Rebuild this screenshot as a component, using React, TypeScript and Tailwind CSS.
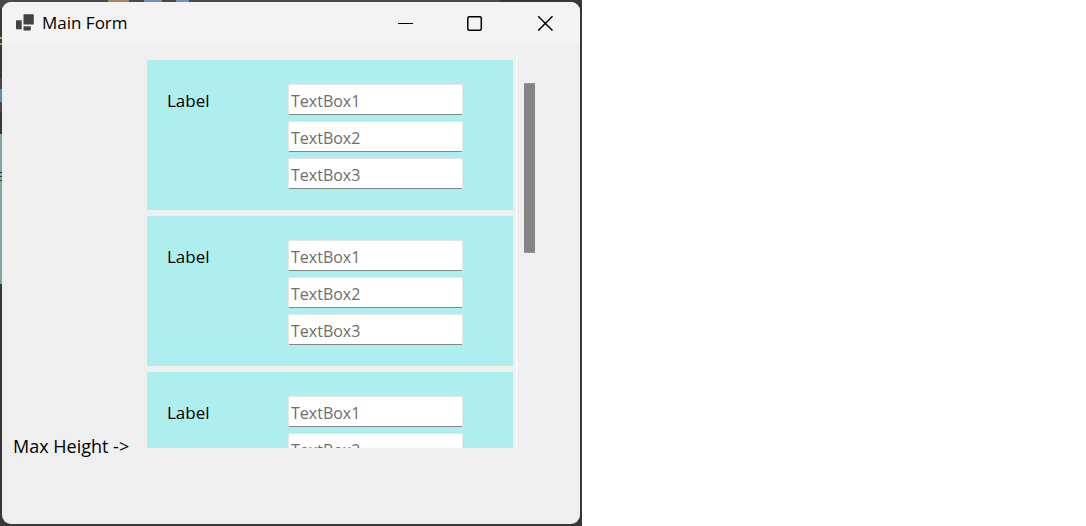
import { useId } from 'react';

const fields = ['TextBox1', 'TextBox2', 'TextBox3'];
const cards = [1, 2, 3];

function AppIcon() {
  return (
    <svg width="20" height="18" viewBox="0 0 20 18" aria-hidden="true" className="shrink-0">
      <g fill="#424242">
        <rect x="9.500" y="0.200" width="10.300" height="10.300" rx="0.5" />
        <rect x="2" y="6.200" width="5.700" height="9" rx="0.5" />
        <rect x="9.500" y="12.200" width="7.300" height="4.200" rx="0.5" />
      </g>
    </svg>
  );
}

function TitleBar() {
  return (
    <header className="flex h-[43px] items-center bg-[#f3f3f3] pb-[2px] pl-3">
      <AppIcon />
      <h1 className="grow pl-2 text-[17px] leading-6">Main Form</h1>
      <div className="flex h-full">
        <button type="button" aria-label="Minimize" className="flex w-[70px] items-center justify-center">
          <svg width="16" height="16" viewBox="0 0 16 16" aria-hidden="true">
            <path d="M1 8.5H16" stroke="#000" />
          </svg>
        </button>
        <button type="button" aria-label="Maximize" className="flex w-[70px] items-center justify-center">
          <svg width="16" height="16" viewBox="0 0 16 16" fill="none" aria-hidden="true">
            <rect x="0.8" y="1.7" width="13.5" height="13.5" rx="1.5" stroke="#000" strokeWidth="1.5" />
          </svg>
        </button>
        <button type="button" aria-label="Close" className="flex w-[70px] items-center justify-center">
          <svg width="16" height="16" viewBox="0 0 16 16" aria-hidden="true">
            <path d="M1.200 1.300L15.500 15.600M15.500 1.300L1.200 15.600" stroke="#000" strokeWidth="1.4" />
          </svg>
        </button>
      </div>
    </header>
  );
}

function FieldCard() {
  const id = useId();
  return (
    <div className="flex justify-between bg-[#afeeee] pt-6 pr-[50px] pb-[21px] pl-5">
      <label htmlFor={id} className="pt-[5px] leading-6">
        Label
      </label>
      <div className="flex w-[175px] flex-col gap-[6px]">
        {fields.map((name, i) => (
          <input
            key={name}
            id={i === 0 ? id : undefined}
            aria-label={i === 0 ? undefined : name}
            placeholder={name}
            className="h-[31px] w-full rounded-[2px] border border-[#e6e6e6] border-b-[#868686] bg-white px-[2px] pt-[2px] text-[16px] placeholder:text-[#6d6d6d]"
          />
        ))}
      </div>
    </div>
  );
}

/* Slivers of the desktop that show around the window's edges. */
function Backdrop() {
  return (
    <svg className="absolute top-0 left-0" width="582" height="526" aria-hidden="true">
      <rect width="582" height="526" fill="#383838" />
      <rect width="500" height="8" fill="#4a4848" />
      <rect x="108" width="21" height="2" fill="#a58860" />
      <rect x="144" width="18" height="2" fill="#6e94bd" />
      <rect x="176" width="13" height="2" fill="#6e94bd" />
      <path d="M0 38H2M0 44H2" stroke="#b79a68" strokeWidth="2" />
      <rect y="78" width="2" height="34" fill="#4a484d" />
      <rect y="89" width="2" height="13" fill="#6685b8" />
      <rect y="134" width="2" height="150" fill="#83a5a7" />
      <path d="M0 172.500H2M0 176.500H2M0 180.500H2" stroke="#303838" />
    </svg>
  );
}

export default function App() {
  return (
    <main className="min-h-screen bg-white font-['Open_Sans','Noto_Sans',sans-serif] text-[17px] text-black">
      <div className="relative w-full max-w-[582px] p-[2px]">
        <Backdrop />
        <section className="relative overflow-hidden rounded-[9px] bg-[#efefef]">
          <TitleBar />
          <div className="flex items-end pt-3 pb-[66px] pl-[11px]">
            <p className="w-[134px] shrink-0 text-[18px] leading-6">Max Height -&gt;</p>
            <div className="mb-[10px] flex max-h-[391px] w-[388px]">
              <div className="flex grow flex-col gap-[6px] overflow-y-auto border-r border-white pt-[3px] pr-[3px] [scrollbar-width:none]">
                {cards.map((n) => (
                  <FieldCard key={n} />
                ))}
              </div>
              <div className="pt-[26px] pl-[7px]" aria-hidden="true">
                <div className="h-[170px] w-[11px] border-y border-[#979797] bg-[#858585]" />
              </div>
            </div>
          </div>
        </section>
      </div>
    </main>
  );
}
